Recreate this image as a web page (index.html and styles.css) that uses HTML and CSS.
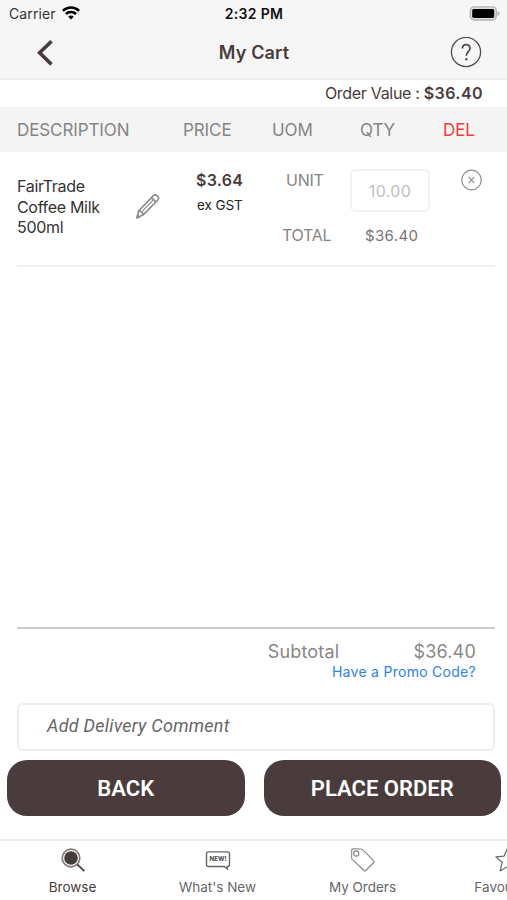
FILE: index.html
```html
<!DOCTYPE html>
<html lang="en">
<head>
<meta charset="utf-8">
<title>My Cart</title>
<link rel="stylesheet" href="styles.css">
</head>
<body>
<div class="app">
  <header class="top">
    <div class="status">
      <div class="carrier"><span>Carrier</span>
        <svg width="18" height="14" viewBox="0 0 18 14" fill="none" stroke="#000" stroke-width="2.5"><path d="M.9 4.8a11.6 11.6 0 0 1 16.2 0M3.9 8a7.3 7.3 0 0 1 10.2 0"/><path d="M9 13.6 6.2 10.8a4 4 0 0 1 5.6 0z" fill="#000" stroke="none"/></svg>
      </div>
      <time class="clock">2:32 PM</time>
      <svg class="battery" width="31" height="15" viewBox="0 0 31 15"><rect x="1.3" y=".8" width="26" height="13.2" rx="3.8" fill="#ddd" stroke="#b4b4b4" stroke-width="1.3"/><rect x="3.2" y="2.9" width="22" height="9" rx="1.6"/><path d="M28.5 5v5q2-.8 2-2.5t-2-2.5z" fill="#b4b4b4"/></svg>
    </div>
    <div class="nav">
      <svg class="back-icon" width="18" height="28" viewBox="0 0 18 28" fill="none" stroke="#483b3b" stroke-width="3.6"><path d="M16.5 2.2 4.6 13.8l11.9 11.6"/></svg>
      <h1>My Cart</h1>
      <svg class="help" width="32" height="32" viewBox="0 0 32 32" fill="none" stroke="#554a4a"><circle cx="16" cy="15" r="14.6" stroke-width="1.3"/><path d="M12.4 11.6c0-5.2 7.6-5.2 7.6-.4 0 3.5-3.7 3.6-3.7 7.6" stroke-width="1.8"/><circle cx="16.3" cy="22.3" r="1.2" fill="#554a4a" stroke="none"/></svg>
    </div>
  </header>
  <div class="order-value"><span class="ov-label">Order Value :</span><strong>$36.40</strong></div>
  <div class="columns table-head">
    <span class="h-desc">DESCRIPTION</span><span class="h-price">PRICE</span><span>UOM</span><span>QTY</span><span class="h-del">DEL</span>
  </div>
  <main class="list">
    <article class="item">
      <p class="name">FairTrade<br>Coffee Milk<br>500ml</p>
      <svg class="pencil" width="24" height="26" viewBox="0 0 24 26" fill="none" stroke="#8c8c8c" stroke-width="1.7" stroke-linejoin="round"><path d="M1.4 24.5 2.6 18 17.2 2.8q1.8-1.7 4 .1 2.4 2.2.7 4.1L7.4 21.7z"/><path d="M2.6 18q3.6.2 4.8 3.7M15 5q3.3.8 4.5 4.2"/><path d="M5.2 19.4 17.2 7" stroke-width="1.1"/><path d="m1 25 .4-2.4 1.8 1.7z" fill="#777"/></svg>
      <div class="price"><strong>$3.64</strong><span>ex GST</span></div>
      <div class="labels"><span class="unit">UNIT</span><span class="total">TOTAL</span></div>
      <div class="qty"><span class="qty-box">10.00</span><span class="line-total">$36.40</span></div>
      <svg class="remove" width="22" height="22" viewBox="0 0 22 22" fill="none" stroke="#8d8d8d"><circle cx="10.5" cy="11" r="9.8" stroke-width="1.2"/><path d="m7.8 7.8 5.4 6.4m0-6.4-5.4 6.4" stroke-width="1.1"/></svg>
    </article>
  </main>
  <section class="summary">
    <div class="subtotal"><span class="sub-label">Subtotal</span><span class="sub-value">$36.40</span></div>
    <a class="promo">Have a Promo Code?</a>
  </section>
  <div class="comment"><span>Add Delivery Comment</span></div>
  <div class="actions"><button><span class="b-back">BACK</span></button><button><span class="b-place">PLACE ORDER</span></button></div>
  <nav class="tabs">
    <a class="tab active">
      <svg width="26" height="26" viewBox="0 0 26 26" fill="none" stroke="#483b3b"><circle cx="11" cy="11" r="8.8" stroke-width="1.7" stroke="#857b7b"/><circle cx="11" cy="11" r="6.8" fill="#483b3b" stroke="none"/><path d="m17.3 17.3 7 6.8" stroke-width="1.8"/></svg>
      <span class="t-browse">Browse</span></a>
    <a class="tab">
      <svg width="26" height="26" viewBox="0 0 26 26" fill="none" stroke="#666"><path d="M3.5 4.9h19q2 0 2 2v10.6q0 2-2 2h-.2v2.4l-3-2.4H3.5q-2 0-2-2V6.9q0-2 2-2z" stroke-width="1.4"/><text x="13" y="14.4" text-anchor="middle" textLength="17" lengthAdjust="spacingAndGlyphs" class="new">NEW!</text></svg>
      <span class="t-new">What's New</span></a>
    <a class="tab">
      <svg width="26" height="26" viewBox="0 0 26 26" fill="none" stroke="#858585" stroke-width="1.1" stroke-linejoin="round"><path d="M1.7 3.3q0-1.6 1.6-1.6l8 .3q.8 0 1.4.7l11 11.2q.8.8 0 1.6l-7.9 8q-.8.8-1.6 0L2.5 12.7q-.8-.6-.8-1.5z"/><circle cx="6.3" cy="6.5" r="2.6"/></svg>
      <span class="t-orders">My Orders</span></a>
    <a class="tab">
      <svg width="26" height="26" viewBox="0 0 26 26" fill="none" stroke="#666" stroke-width="1.2" stroke-linejoin="round"><path d="m12.4 1.5 3.3 7.6 8.2.8-6.2 5.4 1.9 8.6-7.2-4.3-7.2 4.3 1.9-8.6L.9 9.9l8.2-.8z"/></svg>
      <span class="t-fav">Favourites</span></a>
  </nav>
</div>
</body>
</html>
```
FILE: styles.css
```css
* { box-sizing: border-box; }
body { margin: 0; background: #fff; font-family: Inter, "Liberation Sans", sans-serif; color: #483b3b; overflow: hidden; }
.app { width: 507px; height: 900px; display: flex; flex-direction: column; overflow: hidden; }
svg { display: block; flex: none; }
span, strong { white-space: nowrap; }
.top { height: 80px; flex: none; background: #f6f6f6; border-bottom: 2px solid #ececec; }
.status { height: 27px; display: grid; grid-template-columns: 1fr auto 1fr; align-items: center; padding: 0 7px 0 9px; }
.carrier { display: flex; align-items: center; gap: 6px; font-size: 14px; letter-spacing: .1px; color: #333; }
.carrier svg { margin-top: -2px; }
.clock { font-size: 14px; font-weight: 600; letter-spacing: .3px; color: #111; margin-left: -1px; }
.battery { justify-self: end; }
.nav { height: 51px; display: grid; grid-template-columns: 1fr auto 1fr; align-items: center; padding: 0 25px 0 35px; }
.nav h1 { margin: 0; font-size: 18px; font-weight: 600; letter-spacing: .15px; margin-left: -9px; }
.help { justify-self: end; }
.order-value { height: 27px; flex: none; display: flex; justify-content: flex-end; align-items: center; gap: 4px; padding: 0 24px 2px 0; font-size: 16px; }
.ov-label { letter-spacing: -.3px; }
.order-value strong { font-weight: 600; letter-spacing: .45px; }
.columns { display: grid; grid-template-columns: 166px 89px 88px 83px 1fr; align-items: center; padding-left: 17px; }
.table-head { height: 45px; flex: none; background: #f4f4f4; font-size: 17px; letter-spacing: -.1px; color: #858585; }
.h-del { color: #f23c3c; }
.list { flex: 1; padding: 0 12px 0 17px; }
.item { display: grid; grid-template-columns: 119px 60px 85px 69px 111px 1fr; height: 115px; border-bottom: 2px solid #f0f0f0; align-items: start; }
.name { margin: 24px 0 0; font-size: 16px; letter-spacing: -.32px; line-height: 20.5px; color: #333; }
.pencil { margin-top: 41px; }
.price { display: flex; flex-direction: column; margin-top: 18px; gap: 5px; color: #222; }
.price strong { font-size: 16px; line-height: 21px; font-weight: 600; letter-spacing: .3px; color: #483b3b; }
.price span { font-size: 13.5px; line-height: 18px; padding-left: 1px; letter-spacing: -.1px; }
.labels { display: flex; flex-direction: column; margin-top: 18px; gap: 34px; font-size: 16px; letter-spacing: -.25px; line-height: 21px; color: #858585; }
.unit { padding-left: 5px; }
.total { padding-left: 1px; }
.qty { display: flex; flex-direction: column; }
.qty-box { width: 80px; height: 43px; margin-top: 17px; border: 2px solid #f2f2f2; border-radius: 6px; text-align: center; line-height: 40px; font-size: 16px; letter-spacing: .35px; color: #c0c0c0; }
.line-total { margin: 14px 0 0 15px; font-size: 15px; letter-spacing: .35px; line-height: 20px; color: #777; }
.remove { margin-top: 17px; }
.summary { height: 76px; flex: none; margin: 0 12px 0 17px; border-top: 2px solid #cacaca; padding: 12px 19px 0 0; }
.subtotal { display: flex; justify-content: flex-end; gap: 74px; font-size: 18px; letter-spacing: .2px; line-height: 22px; color: #888; }
.promo { display: block; text-align: right; white-space: nowrap; font-size: 14px; letter-spacing: .28px; line-height: 18px; color: #2b83f3; }
.comment { height: 48px; flex: none; margin: 0 12px 0 17px; border: 2px solid #eee; border-radius: 6px; padding-left: 28px; font: italic 18px/42px Roboto, sans-serif; letter-spacing: .25px; color: #666; }
.actions { display: flex; gap: 19px; padding: 9px 6px 0 7px; height: 88px; flex: none; }
.actions button { flex: 1; height: 56px; border: 0; border-radius: 20px; background: #4a3c3c; color: #fff; font: 600 22px/57px Roboto, sans-serif; padding: 0; }
.tabs { height: 61px; flex: none; border-top: 2px solid #ececec; display: flex; overflow: hidden; }
.tab { width: 145px; flex: none; display: flex; flex-direction: column; align-items: center; padding-top: 6px; gap: 6px; font-size: 13.5px; line-height: 17px; color: #666; }
.tab.active { color: #483b3b; }
.new { font: 700 6px Inter, sans-serif; fill: #444; stroke: none; }
```
